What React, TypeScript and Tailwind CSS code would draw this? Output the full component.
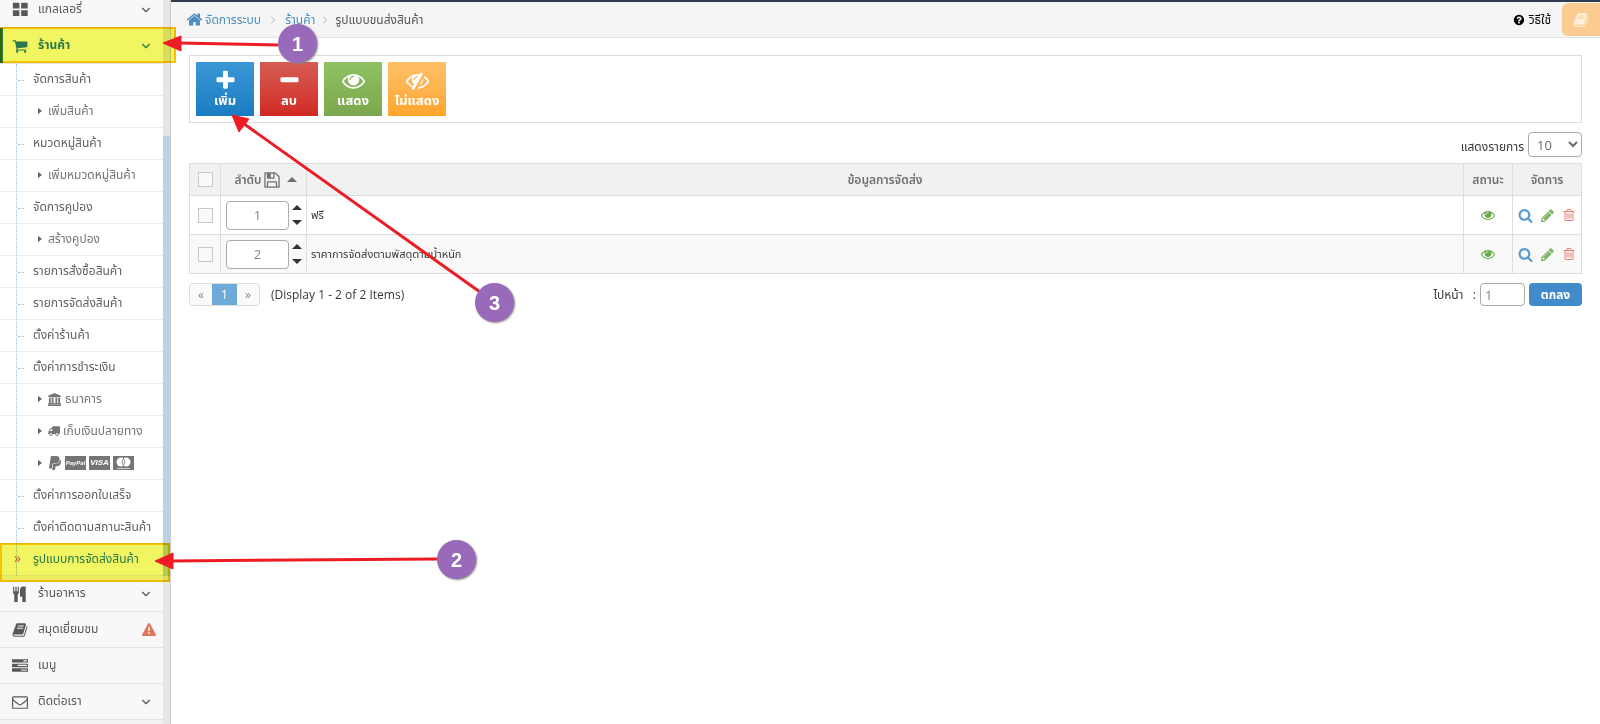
import React, { useState } from 'react';
import { FaPaypal, FaTruck } from 'react-icons/fa';
import { ChevronDown, ChevronRight } from 'lucide-react';

const icons = {
  home: 'M1472 992v480q0 26-19 45t-45 19h-384v-384h-256v384h-384q-26 0-45-19t-19-45v-480q0-1 .5-3t.5-3l575-474 575 474q1 2 1 6zm223-69l-62 74q-8 9-21 11h-3q-13 0-21-7l-692-577-692 577q-12 8-24 7-13-2-21-11l-62-74q-8-10-7-23.5t11-21.5l719-599q32-26 76-26t76 26l244 204v-195q0-14 9-23t23-9h192q14 0 23 9t9 23v408l219 182q10 8 11 21.5t-7 23.5z',
  cart: 'M704 1536q0 52-38 90t-90 38-90-38-38-90 38-90 90-38 90 38 38 90zm896 0q0 52-38 90t-90 38-90-38-38-90 38-90 90-38 90 38 38 90zm128-1088v512q0 24-16.5 42.5t-40.5 21.5l-1044 122q13 60 13 70 0 16-24 64h920q26 0 45 19t19 45-19 45-45 19h-1024q-26 0-45-19t-19-45q0-11 8-31.5t16-36 21.5-40 15.5-29.5l-177-823h-204q-26 0-45-19t-19-45 19-45 45-19h256q16 0 28.5 6.5t19.5 15.5 13 24.5 8 26 5.5 29.5 4.5 26h1201q26 0 45 19t19 45z',
  plus: 'M1600 736v192q0 40-28 68t-68 28h-416v416q0 40-28 68t-68 28h-192q-40 0-68-28t-28-68v-416h-416q-40 0-68-28t-28-68v-192q0-40 28-68t68-28h416v-416q0-40 28-68t68-28h192q40 0 68 28t28 68v416h416q40 0 68 28t28 68z',
  minus: 'M1600 736v192q0 40-28 68t-68 28h-1216q-40 0-68-28t-28-68v-192q0-40 28-68t68-28h1216q40 0 68 28t28 68z',
  eye: 'M1664 960q-152-236-381-353 61 104 61 225 0 185-131.5 316.5t-316.5 131.5-316.5-131.5-131.5-316.5q0-121 61-225-229 117-381 353 133 205 333.5 326.5t434.5 121.5 434.5-121.5 333.5-326.5zm-720-384q0-20-14-34t-34-14q-125 0-214.5 89.5t-89.5 214.5q0 20 14 34t34 14 34-14 14-34q0-86 61-147t147-61q20 0 34-14t14-34zm848 384q0 34-20 69-140 230-376.5 368.5t-499.5 138.5-499.5-139-376.5-368q-20-35-20-69t20-69q140-229 376.5-368t499.5-139 499.5 139 376.5 368q20 35 20 69z',
  eyeSlash: 'M555 1335l78-141q-87-63-136-159t-49-203q0-121 61-225-229 117-381 353 167 258 427 375zm389-759q0-20-14-34t-34-14q-125 0-214.5 89.5t-89.5 214.5q0 20 14 34t34 14 34-14 14-34q0-86 61-147t147-61q20 0 34-14t14-34zm363-191q0 7-1 9-106 189-316 567t-315 566l-49 89q-10 16-28 16-12 0-134-70-16-10-16-28 0-12 44-87-143-65-263.5-173t-208.5-245q-20-31-20-69t20-69q153-235 380-371t496-136q89 0 180 17l54-97q10-16 28-16 5 0 18 6t31 15.5 33 18.5 31.5 18.5 19.5 11.5q16 10 16 27zm37 447q0 139-79 253.5t-209 164.5l280-502q8 45 8 84zm448 128q0 35-20 69-39 64-109 145-150 172-347.5 267t-419.5 95l74-132q212-18 392.5-137t301.5-307q-115-179-282-294l63-112q95 64 182.5 153t144.5 184q20 34 20 69z',
  book: 'M1703 478q40 57 18 129l-275 906q-19 64-76.5 107.5t-122.5 43.5h-923q-77 0-148.5-53.5t-99.5-131.5q-24-67-2-127 0-4 3-27t4-37q1-8-3-21.5t-3-19.5q2-11 8-21t16.5-23.5 16.5-23.5q23-38 45-91.5t30-91.5q3-10 .5-30t-.5-28q3-11 17-28t17-23q21-36 42-92t25-90q1-9-2.5-32t.5-28q4-13 22-30.5t22-22.5q19-26 42.5-84.5t27.5-96.5q1-8-3-25.5t-2-26.5q2-8 9-18t18-23 17-21q8-12 16.5-30.5t15-35 16-36 19.5-32 26.5-23.5 36-11.5 47.5 5.5l-1 3q38-9 51-9h761q74 0 114 56t18 130l-274 906q-36 119-71.5 153.5t-128.5 34.5h-869q-27 0-38 15-11 16-1 43 24 70 144 70h923q29 0 56-15.5t35-41.5l300-987q7-22 5-57 38 15 59 43zm-1064 2q-4 13 2 22.5t20 9.5h608q13 0 25.5-9.5t16.5-22.5l21-64q4-13-2-22.5t-20-9.5h-608q-13 0-25.5 9.5t-16.5 22.5zm-83 256q-4 13 2 22.5t20 9.5h608q13 0 25.5-9.5t16.5-22.5l21-64q4-13-2-22.5t-20-9.5h-608q-13 0-25.5 9.5t-16.5 22.5z',
  warning: 'M1008 67l768 1408q35 63-2 126-17 29-46.500 46t-63.500 17h-1536q-34 0-63.500-17t-46.500-46q-37-63-2-126l768-1408q17-31 47-49t65-18 65 18 47 49zM1000 1380v-190h-208v190zM990 1020l24-490h-236l24 490z',
  pencil: 'M491 1536l91-91-235-235-91 91v107h128v128h107zm523-928q0-22-22-22-10 0-17 7l-542 542q-7 7-7 17 0 22 22 22 10 0 17-7l542-542q7-7 7-17zm-54-192l416 416-832 832h-416v-416zm683 96q0 53-37 90l-166 166-416-416 166-165q36-38 90-38 53 0 91 38l235 234q37 39 37 91z',
  trash: 'M704 736v576q0 14-9 23t-23 9h-64q-14 0-23-9t-9-23v-576q0-14 9-23t23-9h64q14 0 23 9t9 23zm256 0v576q0 14-9 23t-23 9h-64q-14 0-23-9t-9-23v-576q0-14 9-23t23-9h64q14 0 23 9t9 23zm256 0v576q0 14-9 23t-23 9h-64q-14 0-23-9t-9-23v-576q0-14 9-23t23-9h64q14 0 23 9t9 23zm128 724v-948h-896v948q0 22 7 40.5t14.5 27 10.5 8.5h832q3 0 10.5-8.5t14.5-27 7-40.5zm-672-1076h448l-48-117q-7-9-17-11h-317q-10 2-17 11zm928 32v64q0 14-9 23t-23 9h-96v948q0 83-47 143.5t-113 60.5h-832q-66 0-113-58.5t-47-141.5v-952h-96q-14 0-23-9t-9-23v-64q0-14 9-23t23-9h309l70-167q15-37 54-63t79-26h320q40 0 79 26t54 63l70 167h309q14 0 23 9t9 23z',
  search: 'M1216 832q0-185-131.5-316.5t-316.5-131.5-316.5 131.5-131.5 316.5 131.5 316.5 316.5 131.5 316.5-131.5 131.5-316.5zm512 832q0 52-38 90t-90 38q-54 0-90-38l-343-342q-179 124-399 124-143 0-273.5-55.5t-225-150-150-225-55.5-273.5 55.5-273.5 150-225 225-150 273.5-55.5 273.5 55.5 225 150 150 225 55.5 273.5q0 220-124 399l343 343q37 37 37 90z',
  help: 'M1024 1376v-192q0-14-9-23t-23-9h-192q-14 0-23 9t-9 23v192q0 14 9 23t23 9h192q14 0 23-9t9-23zm256-672q0-88-55.5-163t-138.5-116-170-41q-243 0-371 213-15 24 8 42l132 100q7 6 19 6 16 0 25-12 53-68 86-92 34-24 86-24 48 0 85.5 26t37.5 59q0 38-20 61t-68 45q-63 28-115.5 86.5t-52.5 125.5v36q0 14 9 23t23 9h192q14 0 23-9t9-23q0-19 21.5-49.5t54.5-49.5q32-18 49-28.5t46-35 44.5-48 28-60.5 12.5-81zm384 192q0 209-103 385.5t-279.5 279.5-385.5 103-385.5-103-279.5-279.5-103-385.5 103-385.5 279.5-279.5 385.5-103 385.5 103 279.5 279.5 103 385.5z',
  grid: 'M160 96h608q64 0 64 64v512q0 64-64 64h-608q-64 0-64-64v-512q0-64 64-64zM1088 96h608q64 0 64 64v512q0 64-64 64h-608q-64 0-64-64v-512q0-64 64-64zM160 928h608q64 0 64 64v512q0 64-64 64h-608q-64 0-64-64v-512q0-64 64-64zM1088 928h608q64 0 64 64v512q0 64-64 64h-608q-64 0-64-64v-512q0-64 64-64z',
  tasks: 'M1024 1408h640v-128h-640v128zm-384-512h1024v-128h-1024v128zm640-512h384v-128h-384v128zm512 832v256q0 26-19 45t-45 19h-1664q-26 0-45-19t-19-45v-256q0-26 19-45t45-19h1664q26 0 45 19t19 45zm0-512v256q0 26-19 45t-45 19h-1664q-26 0-45-19t-19-45v-256q0-26 19-45t45-19h1664q26 0 45 19t19 45zm0-512v256q0 26-19 45t-45 19h-1664q-26 0-45-19t-19-45v-256q0-26 19-45t45-19h1664q26 0 45 19t19 45z',
  cutlery: 'M768 128v640q0 61-35.500 111t-92.500 70v779q0 52-38 90t-90 38h-128q-52 0-90-38t-38-90v-779q-57-20-92.500-70t-35.500-111v-640q0-26 19-45t45-19 45 19 19 45v416q0 26 19 45t45 19 45-19 19-45v-416q0-26 19-45t45-19 45 19 19 45v416q0 26 19 45t45 19 45-19 19-45v-416q0-26 19-45t45-19 45 19 19 45zm768 0v1600q0 52-38 90t-90 38h-128q-52 0-90-38t-38-90v-512h-224q-13 0-22.500-9.500t-9.500-22.500v-800q0-132 94-226t226-94h256q26 0 45 19t19 45z',
  envelope: 'M1664 1504v-768q-32 36-69 66-268 206-426 338-51 43-83 67t-86.500 48.500-102.500 24.500h-2q-48 0-102.500-24.500t-86.500-48.500-83-67q-158-132-426-338-37-30-69-66v768q0 13 9.500 22.500t22.500 9.500h1472q13 0 22.500-9.500t9.500-22.500zm0-1051v-24.500l-.5-13-3-12.500-5.500-9-9-7.500-14-2.500h-1472q-13 0-22.500 9.500t-9.500 22.500q0 168 147 284 193 152 401 317 6 5 35 29.500t46 37.500 44.500 31.500 50.500 27.500 43 9h2q20 0 43-9t50.500-27.500 44.500-31.500 46-37.500 35-29.500q208-165 401-317 54-43 100.500-115.500t46.500-131.500zm128-37v1088q0 66-47 113t-113 47h-1472q-66 0-113-47t-47-113v-1088q0-66 47-113t113-47h1472q66 0 113 47t47 113z',
  bank: 'M896 0l896 384v128h-128q0 40-60 64h-1416q-60-24-60-64h-128v-128zM128 640h256v768h128v-768h256v768h256v-768h256v768h128v-768h256v768h64q64 10 64 64v64h-1792v-64q0-54 64-64h64zM0 1600h1792v192h-1792z',
  floppy: 'M512 1536h768v-384h-768v384zm896 0h128v-896q0-14-10-38.500t-20-34.500l-281-281q-10-10-34-20t-39-10v416q0 40-28 68t-68 28h-576q-40 0-68-28t-28-68v-416h-128v1280h128v-416q0-40 28-68t68-28h832q40 0 68 28t28 68v416zm-384-928v-320q0-13-9.500-22.500t-22.500-9.500h-192q-13 0-22.500 9.500t-9.500 22.500v320q0 13 9.500 22.500t22.500 9.500h192q13 0 22.500-9.500t9.500-22.500zm640 32v928q0 40-28 68t-68 28h-1344q-40 0-68-28t-28-68v-1344q0-40 28-68t68-28h928q40 0 88 20t76 48l280 280q28 28 48 76t20 88z',
};

const Icon = ({ name, className = '' }: { name: keyof typeof icons; className?: string }) => (
  <svg viewBox="0 0 1792 1792" fill="currentColor" className={`shrink-0 ${className}`} aria-hidden="true">
    <path fillRule={name === 'warning' ? 'evenodd' : 'nonzero'} d={icons[name]} />
  </svg>
);

const cardStyle = "flex h-3.5 w-[21px] items-center justify-center bg-[#757575] font-['Liberation_Sans',sans-serif] leading-none font-bold text-white italic";

const subMenu = [
  { label: 'จัดการสินค้า' },
  { label: 'เพิ่มสินค้า', child: true },
  { label: 'หมวดหมู่สินค้า' },
  { label: 'เพิ่มหมวดหมู่สินค้า', child: true },
  { label: 'จัดการคูปอง' },
  { label: 'สร้างคูปอง', child: true },
  { label: 'รายการสั่งซื้อสินค้า' },
  { label: 'รายการจัดส่งสินค้า' },
  { label: 'ตั้งค่าร้านค้า' },
  { label: 'ตั้งค่าการชำระเงิน' },
  { label: 'ธนาคาร', child: true, icon: <Icon name="bank" className="mr-px size-[13px]" /> },
  { label: 'เก็บเงินปลายทาง', child: true, icon: <FaTruck className="size-3 -scale-x-100" /> },
  {
    label: '',
    child: true,
    icon: (
      <>
        <svg width="14" height="16" viewBox="24 30 340 452" preserveAspectRatio="none" className="hidden" />
        <FaPaypal className="h-4 w-3.5" />
        <span className={`${cardStyle} text-[6px]`}>PayPal</span>
        <span className={`${cardStyle} text-[8px]`}>VISA</span>
        <svg width="21" height="14" aria-label="Mastercard">
          <rect width="21" height="14" fill="#757575" />
          <circle cx="8" cy="6" r="4.500" fill="#fff" />
          <circle cx="13" cy="6" r="4.500" fill="#fff" />
          <path d="M10.500 2.300q3 3.700 0 7.400q-3-3.700 0-7.400z" fill="#fff" stroke="#757575" strokeWidth=".8" />
          <path d="M4 12.500h13" stroke="#ccc" />
        </svg>
      </>
    ),
  },
  { label: 'ตั้งค่าการออกใบเสร็จ' },
  { label: 'ตั้งค่าติดตามสถานะสินค้า' },
  { label: 'รูปแบบการจัดส่งสินค้า', active: true },
];

const toolbar: { label: string; icon: keyof typeof icons; color: string }[] = [
  { label: 'เพิ่ม', icon: 'plus', color: 'from-[#3b98d6] to-[#197cc1]' },
  { label: 'ลบ', icon: 'minus', color: 'from-[#d55b52] to-[#d12723]' },
  { label: 'แสดง', icon: 'eye', color: 'from-[#8fc162] to-[#7ba84e]' },
  { label: 'ไม่แสดง', icon: 'eyeSlash', color: 'from-[#ffc068] to-[#ffa629]' },
];

const MenuItem = ({
  icon,
  label,
  chevron,
  warn,
  active,
}: {
  icon: keyof typeof icons;
  label: string;
  chevron?: boolean;
  warn?: boolean;
  active?: boolean;
}) => (
  <a
    href="#"
    className={`flex h-9 items-center border-b border-[#e5e5e5] pl-3 text-xs ${
      active ? 'bg-white font-bold text-[#2b7dbc] shadow-[inset_3px_0_0_#3382af]' : 'bg-[#f8f8f8] text-[#585858]'
    }`}
  >
    <Icon name={icon} className="mr-2.5 size-4" />
    <span className="flex-1 pb-0.5 whitespace-nowrap">{label}</span>
    {chevron && <ChevronDown className="mr-2.5 size-3.5" strokeWidth={2} />}
    {warn && <Icon name="warning" className="mr-[7px] size-3.5 text-[#e2755f]" />}
  </a>
);

const Sidebar = () => (
  <aside className="flex h-screen w-[171px] shrink-0 overflow-hidden border-r border-[#ccc] bg-[#f2f2f2]">
    <nav className="-mt-2 flex-1">
      <MenuItem icon="grid" label="แกลเลอรี่" chevron />
      <MenuItem icon="cart" label="ร้านค้า" chevron active />
      <ul className="relative bg-white">
        {subMenu.map((item, i) => (
          <li key={i} className="relative h-8 border-b border-dotted border-[#ddd]">
            {item.active && (
              <span className="absolute top-1/2 left-3.5 z-10 -translate-y-1/2 pb-1 text-sm leading-none text-[#c86139]">»</span>
            )}
            {!item.child && !item.active && (
              <span className="absolute top-4 left-[18px] w-1.5 border-t border-dotted border-[#9dbdd6]" />
            )}
            <a
              href="#"
              className={`flex h-full items-center pb-px text-xs whitespace-nowrap ${
                item.child ? 'gap-[3px] pl-[38px] text-[#757575]' : 'pl-[33px]'
              } ${item.active ? 'text-[#2b7dbc]' : 'text-[#616161]'}`}
            >
              {item.child && <span className="mr-[3px] size-0 border-y-3 border-l-4 border-y-transparent border-l-[#616161]" />}
              {item.icon}
              {item.label}
            </a>
          </li>
        ))}
        <li aria-hidden="true" className="absolute inset-y-0 left-4 border-l border-dotted border-[#9dbdd6]" />
      </ul>
      <MenuItem icon="cutlery" label="ร้านอาหาร" chevron />
      <MenuItem icon="book" label="สมุดเยี่ยมชม" warn />
      <MenuItem icon="tasks" label="เมนู" />
      <MenuItem icon="envelope" label="ติดต่อเรา" chevron />
    </nav>
    <div className="w-[7px] bg-[#e6e6e6] pt-[136px]">
      <div className="h-[440px] bg-[#bad3e4]" />
    </div>
  </aside>
);

const Breadcrumb = () => (
  <header className="flex h-[38px] items-center border-t-2 border-b border-t-[#2f3a4f] border-b-[#e5e5e5] bg-[#f5f5f5] pl-[15px] text-xs text-[#555]">
    <Icon name="home" className="mr-0.5 size-[17px] text-[#4c8fbd]" />
    <a href="#" className="text-[#4c8fbd]">จัดการระบบ</a>
    <ChevronRight className="mx-1.5 size-3 text-[#b2b6bf]" />
    <a href="#" className="text-[#4c8fbd]">ร้านค้า</a>
    <ChevronRight className="mx-1 size-3 text-[#b2b6bf]" />
    <span>รูปแบบขนส่งสินค้า</span>
    <a href="#" className="mr-[11px] ml-auto flex items-center gap-1 text-black">
      <Icon name="help" className="size-3" />
      วิธีใช้
    </a>
    <button aria-label="คู่มือ" className="flex h-[33px] w-[38px] items-center justify-center rounded-l-md bg-[#fccb8f] text-[#fff1de]">
      <Icon name="book" className="size-4" />
    </button>
  </header>
);

const Badge = ({ n, className }: { n: number; className: string }) => (
  <div
    className={`absolute flex size-[39px] items-center justify-center rounded-full bg-[#996ab9] font-['Liberation_Sans',sans-serif] text-xl font-bold text-white shadow-[1px_1px_2px_#888] ${className}`}
  >
    {n}
  </div>
);

// numbered steps drawn over the page
const Annotations = () => (
  <div className="pointer-events-none absolute inset-0 overflow-hidden">
    <div className="absolute top-[27px] left-0 h-9 w-44 border-2 border-[#f8c300] bg-[#f1f562] mix-blend-multiply" />
    <div className="absolute top-[543px] left-0 h-[39px] w-[170px] border-2 border-[#f8c300] bg-[#f1f562] mix-blend-multiply" />
    <svg className="absolute top-0 left-0" width="520" height="600" fill="#ed1c24" stroke="#ed1c24">
      <path d="M278 45L178 43M437 559L170 561M480 292L240 121" strokeWidth="3" />
      <path d="M163 43l18-7v15zM155 561l18-8v16zM232 115l17 4-10 13z" strokeWidth="1" />
    </svg>
    <Badge n={1} className="top-6 left-[278px]" />
    <Badge n={2} className="top-[540px] left-[437px]" />
    <Badge n={3} className="top-[283px] left-[475px]" />
  </div>
);

export default function App() {
  const [rows, setRows] = useState([
    { name: 'ฟรี', order: '1', checked: false },
    { name: 'ราคาการจัดส่งตามพัสดุตามน้ำหนัก', order: '2', checked: false },
  ]);

  const update = (index: number, values: Partial<(typeof rows)[number]>) => {
    setRows(rows.map((row, i) => (i === index ? { ...row, ...values } : row)));
  };

  const checkbox = 'block mx-auto size-[15px] appearance-none border border-[#c8c8c8] bg-[#fafafa] checked:bg-[#6fabd8]';

  return (
    <div className="relative flex h-screen overflow-hidden bg-white font-['Open_Sans',Tahoma,'Noto_Sans_Thai',sans-serif] text-xs text-[#393939]">
      <Sidebar />
      <main className="min-w-0 flex-1">
        <Breadcrumb />
        <div className="px-[18px] pt-[17px]">
          <div className="flex gap-1.5 border border-[#ddd] p-1.5">
            {toolbar.map((item) => (
              <button
                key={item.icon}
                className={`flex h-[54px] w-[58px] flex-col items-center justify-center bg-linear-to-b pb-0.5 text-[13px] font-bold whitespace-nowrap text-white ${item.color}`}
              >
                <Icon name={item.icon} className="size-[23px]" />
                <span className="leading-4">{item.label}</span>
              </button>
            ))}
          </div>

          <div className="mt-[9px] flex items-center justify-end gap-1">
            <label htmlFor="perPage" className="pt-1">แสดงรายการ</label>
            <select id="perPage" className="h-[25px] w-[54px] rounded border border-[#aaa] bg-white pl-1 text-[13px] text-[#696969]">
              <option>10</option>
              <option>25</option>
              <option>50</option>
            </select>
          </div>

          <table className="mt-1.5 w-full table-fixed border-collapse border border-[#ddd]">
            <thead>
              <tr className="h-8 bg-[#f1f1f1] text-xs text-[#707070] [&>th]:border [&>th]:border-[#ddd] [&>th]:font-semibold">
                <th className="w-[31px]"><input type="checkbox" aria-label="เลือกทั้งหมด" className={checkbox} /></th>
                <th className="w-[86px]">
                  <div className="flex items-center justify-center pl-1">
                    ลำดับ
                    <Icon name="floppy" className="mr-1.5 ml-px size-[18px]" />
                    <span className="size-0 border-x-5 border-b-5 border-x-transparent border-b-[#707070]" />
                  </div>
                </th>
                <th>ข้อมูลการจัดส่ง</th>
                <th className="w-[49px]">สถานะ</th>
                <th className="w-[69px]">จัดการ</th>
              </tr>
            </thead>
            <tbody>
              {rows.map((row, i) => (
                <tr key={row.name} className="h-[39px] even:bg-[#f9f9f9] [&>td]:border [&>td]:border-[#ddd]">
                  <td>
                    <input
                      type="checkbox"
                      aria-label={row.name}
                      checked={row.checked}
                      onChange={(e) => update(i, { checked: e.target.checked })}
                      className={checkbox}
                    />
                  </td>
                  <td>
                    <div className="flex items-center pl-[5px]">
                      <input
                        aria-label={`ลำดับ ${row.name}`}
                        value={row.order}
                        onChange={(e) => update(i, { order: e.target.value })}
                        className="h-[29px] w-[63px] rounded border border-[#aaa] bg-white text-center text-[13px] text-[#858585]"
                      />
                      <div className="ml-[3px] flex flex-col gap-2.5">
                        <button
                          aria-label="เลื่อนขึ้น"
                          onClick={() => update(i, { order: String(Number(row.order) - 1) })}
                          className="size-0 border-x-5 border-b-5 border-x-transparent border-b-[#333]"
                        />
                        <button
                          aria-label="เลื่อนลง"
                          onClick={() => update(i, { order: String(Number(row.order) + 1) })}
                          className="size-0 border-x-5 border-t-5 border-x-transparent border-t-[#333]"
                        />
                      </div>
                    </div>
                  </td>
                  <td className="pl-1 text-[11px]">{row.name}</td>
                  <td><Icon name="eye" className="mx-auto size-3.5 text-[#69aa46]" /></td>
                  <td>
                    <div className="flex items-center justify-center gap-[7px]">
                      <button aria-label="ดู"><Icon name="search" className="size-[15px] text-[#5a9bd0]" /></button>
                      <button aria-label="แก้ไข"><Icon name="pencil" className="size-[15px] text-[#7db765]" /></button>
                      <button aria-label="ลบ"><Icon name="trash" className="size-3.5 text-[#e88073]" /></button>
                    </div>
                  </td>
                </tr>
              ))}
            </tbody>
          </table>

          <div className="mt-[9px] flex items-center">
            <div className="flex h-[23px] overflow-hidden rounded border border-[#ddd] bg-[#fafafa] text-[#888]">
              <button className="w-[22px]">«</button>
              <button className="-my-px w-[25px] bg-[#6fabd8] text-white">1</button>
              <button className="w-[22px]">»</button>
            </div>
            <span className="ml-[11px]">(Display 1 - 2 of 2 Items)</span>
            <label htmlFor="page" className="mr-1 ml-auto">ไปหน้า &nbsp;&nbsp;:</label>
            <input id="page" defaultValue="1" className="mr-1 h-[23px] w-[45px] rounded border border-[#aaa] px-1 text-[13px] text-[#858585]" />
            <button className="h-[23px] w-[53px] rounded-sm bg-[#428bca] font-bold text-white">ตกลง</button>
          </div>
        </div>
      </main>
      <Annotations />
    </div>
  );
}
